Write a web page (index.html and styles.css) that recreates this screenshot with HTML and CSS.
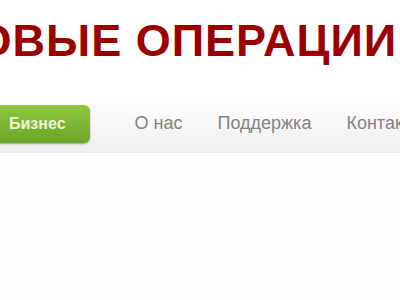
FILE: index.html
```
<!DOCTYPE html>
<html lang="ru">
<head>
  <meta charset="UTF-8">
  <title>Финансовые операции</title>
  <meta name="viewport" content="width=device-width, initial-scale=1.0">
  <link rel="stylesheet" href="styles.css">
</head>
<body>
  <div class="page">
    <header class="site-header">
      <h1 class="logo">ФИНАНСОВЫЕ ОПЕРАЦИИ АО</h1>
    </header>

    <nav class="menu">
      <a class="menu-item active" href="#">Бизнес</a>
      <a class="menu-item" href="#">О нас</a>
      <a class="menu-item" href="#">Поддержка</a>
      <a class="menu-item" href="#">Контакты</a>
    </nav>

    <div class="content"></div>
  </div>
</body>
</html>
```

FILE: styles.css
```
html, body {
  margin: 0;
  padding: 0;
  overflow: hidden;
}
body {
  font-family: "Liberation Sans", Arial, sans-serif;
  background: #fdfdfd;
  color: #333;
}
.page {
  width: 960px;
  margin-left: -260px;
}
.site-header {
  height: 95px;
  background: #fff;
  padding: 17px 0 0 31px;
  box-sizing: border-box;
}
.logo {
  margin: 0;
  font-size: 45px;
  line-height: 48px;
  letter-spacing: 1px;
  font-weight: bold;
  color: #9a0000;
  white-space: nowrap;
}
.menu {
  display: flex;
  align-items: center;
  height: 57px;
  padding-left: 240px;
  background: linear-gradient(#ffffff, #efefef);
  border-bottom: 1px solid #e9e9e9;
}
.menu-item {
  font-size: 18px;
  color: #838383;
  text-decoration: none;
  margin-right: 35px;
}
.menu-item.active {
  display: block;
  padding: 10px 24px 10px 29px;
  margin-right: 45px;
  line-height: 18px;
  color: #edf5d8;
  font-weight: bold;
  font-size: 16px;
  background: linear-gradient(#8fc741, #6ca426);
  border-radius: 6px;
  box-shadow: 0 1px 2px rgba(0, 0, 0, 0.35);
}
.content {
  height: 200px;
  background: #fdfdfd;
}
```
